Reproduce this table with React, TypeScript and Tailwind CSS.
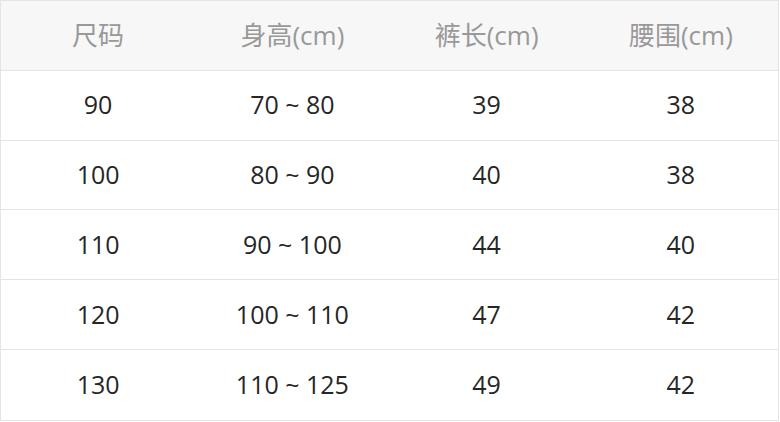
import React from 'react';

const rows = [
  ['90', '70 ~ 80', '39', '38'],
  ['100', '80 ~ 90', '40', '38'],
  ['110', '90 ~ 100', '44', '40'],
  ['120', '100 ~ 110', '47', '42'],
  ['130', '110 ~ 125', '49', '42'],
];

const headers = ['尺码', '身高(cm)', '裤长(cm)', '腰围(cm)'];

const App = () => {
  return (
    <div
      className="w-[780px] h-[422px] bg-white"
      style={{ fontFamily: '"Open Sans", "Noto Sans CJK SC", sans-serif' }}
    >
      <div className="w-[779px] h-[421px] border border-[#e4e4e4] flex flex-col">
        {/* header */}
        <div className="grid grid-cols-4 h-[70px] bg-[#f7f7f7] border-b border-[#e4e4e4] text-[26px] text-[#999]">
          {headers.map((h) => (
            <div key={h} className="flex items-center justify-center">
              {h}
            </div>
          ))}
        </div>
        {rows.map((r, i) => (
          <div
            key={i}
            className={`grid grid-cols-4 h-[70px] text-[25px] text-[#262626] ${
              i < rows.length - 1 ? 'border-b border-[#e4e4e4]' : ''
            }`}
          >
            {r.map((c, j) => (
              <div key={j} className="flex items-center justify-center">
                {c}
              </div>
            ))}
          </div>
        ))}
      </div>
    </div>
  );
};

export default App;
